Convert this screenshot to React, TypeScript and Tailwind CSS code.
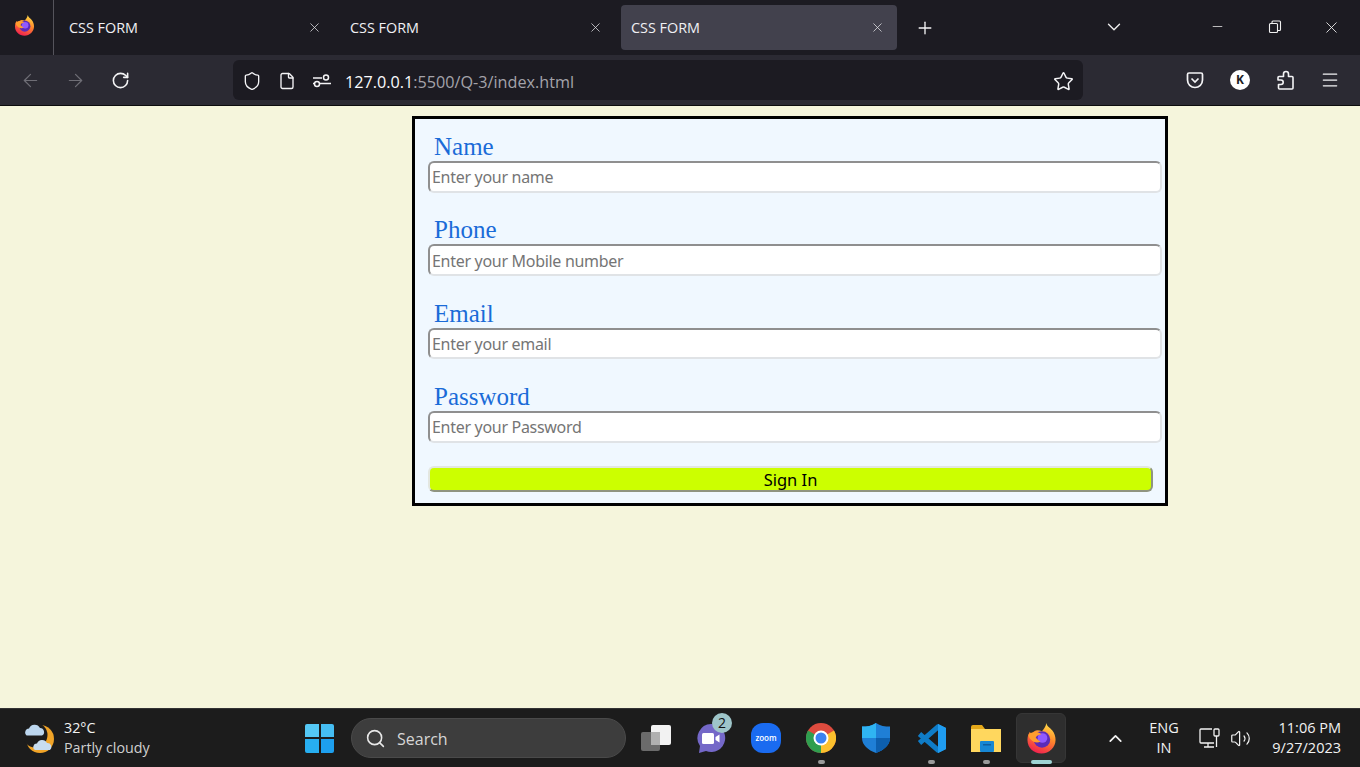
import React from 'react'
import { ArrowLeft, ArrowRight, RotateCw, Shield, File, Star, X, Plus, ChevronDown, ChevronUp, Minus, Menu, Search, Volume2 } from 'lucide-react'

const fields = [
  { label: 'Name', placeholder: 'Enter your name' },
  { label: 'Phone', placeholder: 'Enter your Mobile number' },
  { label: 'Email', placeholder: 'Enter your email' },
  { label: 'Password', placeholder: 'Enter your Password' },
]

function FirefoxLogo({ size, id }: { size: number; id: string }) {
  return (
    <svg width={size} height={size} viewBox="0 0 32 32">
      <defs>
        <linearGradient id={id} x1="0.75" y1="0" x2="0.35" y2="1">
          <stop offset="0" stopColor="#ffe14a" />
          <stop offset="0.45" stopColor="#ff8a2b" />
          <stop offset="1" stopColor="#f0204f" />
        </linearGradient>
      </defs>
      <path d="M21 0c.5 3.500 4 5 6 7.500 2.500 3 3.500 6.500 3.500 10C30.500 25 24 31.500 16 31.500S1.500 25.500 1.500 17.500c0-3.500 1-6.500 2.500-8.500.5 1 1 1.500 2 2 1.500-2 3.500-3.500 6-3.500 1.500 0 3 .5 4.500 1C18.500 6 20.500 3.500 21 0z" fill={`url(#${id})`} />
      <circle cx="16.500" cy="17" r="8.500" fill="#5b2bb8" />
      <circle cx="17" cy="15.500" r="5" fill="#9059ff" />
      <path d="M2.500 12C6 8.500 12 8.500 16 11.500c-3 .5-5.500 1.500-6 4 2 1 3 3 5 3.500-3 2-7.500 1-10-2-1.500-1.500-2.500-3-2.500-5z" fill="#ff9d2e" />
    </svg>
  )
}

function TabItem({ active }: { active?: boolean }) {
  return (
    <div className={active ? 'w-[276px] h-[45px] ml-[5px] pl-[10px] pr-[12px] flex items-center justify-between rounded bg-[#42414d]' : 'w-[281px] h-[45px] pl-[15px] pr-[13px] flex items-center justify-between'}>
      <span className="text-[14.400px] text-[#f0f0f4]">CSS FORM</span>
      <X size={15} strokeWidth={1.2} className="text-[#e4e4e8]" />
    </div>
  )
}

function TabBar() {
  return (
    <div className="h-[55px] bg-[#1c1b22] flex">
      <div className="w-[54px] h-[55px] border-r border-[#55545c] flex items-center justify-center pr-[4px] pb-[4px]">
        <FirefoxLogo size={21} id="ff-small" />
      </div>
      <div className="flex pt-[5px]">
        <TabItem />
        <TabItem />
        <TabItem active />
      </div>
      <Plus size={20} strokeWidth={1.6} className="text-[#f4f4f6] ml-[18px] mt-[18px]" />
      <ChevronDown size={22} strokeWidth={1.5} className="text-[#eeeeee] ml-[168px] mt-[16px]" />
      <Minus size={15} strokeWidth={1.2} className="text-[#f0f0f0] ml-[85px] mt-[19px]" />
      <svg width="14" height="14" viewBox="0 0 14 14" fill="none" stroke="#f0f0f0" strokeWidth="1.1" className="ml-[43px] mt-[20px]">
        <rect x="1.500" y="3.500" width="8" height="9" rx="1" />
        <path d="M4 3.500V2a1 1 0 0 1 1-1h6.500a1 1 0 0 1 1 1v7.500a1 1 0 0 1-1 1H9.500" />
      </svg>
      <X size={19} strokeWidth={1.1} className="text-[#f0f0f0] ml-[40px] mt-[18px]" />
    </div>
  )
}

function NavBar() {
  return (
    <div className="h-[51px] bg-[#2b2a33] border-b border-[#0c0c0d] flex items-start">
      <ArrowLeft size={21} strokeWidth={1.4} className="text-[#6f6e76] ml-[20px] mt-[15px]" />
      <ArrowRight size={21} strokeWidth={1.4} className="text-[#6f6e76] ml-[24px] mt-[15px]" />
      <RotateCw size={19} strokeWidth={2} className="text-[#f4f4f6] ml-[25px] mt-[16px]" />
      <div className="w-[850px] h-[40px] ml-[103px] mt-[5px] pt-[2px] rounded-md bg-[#1c1b22] flex items-center">
        <Shield size={20} strokeWidth={1.6} className="text-[#f4f4f6] ml-[9px]" />
        <File size={18} strokeWidth={1.8} className="text-[#f4f4f6] ml-[16px]" />
        <svg width="18" height="14" viewBox="0 0 18 14" fill="none" stroke="#f4f4f6" strokeWidth="1.500" className="ml-[17px]">
          <path d="M0 4h9M0 9.500h1M7 9.500h11" />
          <circle cx="13" cy="3.500" r="2.500" />
          <circle cx="4" cy="10" r="2.500" />
        </svg>
        <span className="ml-[14px] mt-[2px] text-[16.200px] text-[#fbfbfe]">
          127.0.0.1<span className="text-[#a4a3aa]">:5500/Q-3/index.html</span>
        </span>
        <Star size={21} strokeWidth={1.7} className="text-[#f4f4f6] ml-auto mr-[9px]" />
      </div>
      <svg width="18" height="18" viewBox="0 0 18 18" fill="none" stroke="#f4f4f6" strokeWidth="1.700" className="ml-[103px] mt-[16px]">
        <path d="M1.500 3.500a1.500 1.500 0 0 1 1.500-1.500h12a1.500 1.500 0 0 1 1.500 1.500V9a7.500 7.500 0 0 1-15 0z" />
        <path d="M5.500 7.500 9 11l3.500-3.500" />
      </svg>
      <div className="w-[20px] h-[20px] ml-[26px] mt-[15px] rounded-full bg-white flex items-center justify-center text-[12px] font-bold text-[#1c1b22]">K</div>
      <svg width="20" height="20" viewBox="0 0 20 20" fill="none" stroke="#f4f4f6" strokeWidth="1.600" strokeLinejoin="round" className="ml-[25px] mt-[15px]">
        <path d="M11 1.500c1.600 0 2.500 1 2.500 2.500v2.500H17a1 1 0 0 1 1 1V18a1 1 0 0 1-1 1H4.500a1 1 0 0 1-1-1v-3.500H6c1.500 0 2.200-1 2.200-2.200S7.500 10 6 10H3V7.500a1 1 0 0 1 1-1h4.500V4c0-1.500 1-2.500 2.500-2.500z" />
      </svg>
      <Menu size={20} strokeWidth={1.5} className="text-[#f4f4f6] ml-[25px] mt-[15px]" />
    </div>
  )
}

function SignInForm() {
  return (
    <form className="w-[756px] h-[390px] ml-[412px] mt-[10px] border-[3px] border-black bg-[#f0f8ff] pt-[14px] pl-[13px] pr-[4px]">
      {fields.map((f) => (
        <div key={f.label} className="h-[83.400px]">
          <label className="block h-[28px] pl-[6px] text-[25px] leading-[28px] text-[#1a6bd8] font-['Liberation_Serif',serif]">{f.label}</label>
          <input
            type="text"
            placeholder={f.placeholder}
            className="block w-[734px] h-[31.500px] px-[2px] pt-[1px] rounded-md border-2 border-t-[#8f8f8f] border-l-[#8f8f8f] border-r-[#e0e3e6] border-b-[#e0e3e6] bg-white text-[16px] tracking-[-0.300px] placeholder:text-[#757575] font-['Noto_Sans',sans-serif] outline-none"
          />
        </div>
      ))}
      <button
        type="button"
        className="block w-[725px] h-[26px] mt-[-0.600px] pt-[1px] rounded-md border-2 border-t-[#e3e6e0] border-l-[#e3e6e0] border-r-[#8f9480] border-b-[#8f9480] bg-[#ccff00] text-[16.500px] leading-[22px] text-black font-['Noto_Sans',sans-serif]"
      >
        Sign In
      </button>
    </form>
  )
}

function WeatherIcon() {
  return (
    <svg width="32" height="32" viewBox="0 0 32 32">
      <circle cx="16" cy="17" r="14" fill="#f0a428" />
      <circle cx="11" cy="13" r="12.500" fill="#1c1c1c" />
      <path d="M2 13a4 4 0 0 1 3-6.500 6 6 0 0 1 11-.5 4 4 0 0 1 2 7.500H4a3 3 0 0 1-2-.5z" fill="#bcd6ee" />
      <path d="M11 28a3.500 3.500 0 0 1 2-6.500 5.500 5.500 0 0 1 10-.5 4 4 0 0 1 3 7z" fill="#c8ddf0" />
    </svg>
  )
}

function WindowsLogo() {
  return (
    <div className="grid grid-cols-2 gap-[2px] w-[29px] h-[29px]">
      <div className="bg-[#54c8f5] rounded-tl-[2px]" />
      <div className="bg-[#45bdf2] rounded-tr-[2px]" />
      <div className="bg-[#27aef0] rounded-bl-[2px]" />
      <div className="bg-[#1d9fee] rounded-br-[2px]" />
    </div>
  )
}

function TaskIcon({ children, mark, active }: { children: React.ReactNode; mark?: 'dot' | 'wide'; active?: boolean }) {
  return (
    <div className="relative w-[55px] h-[50px] flex items-center justify-center">
      {active && <div className="absolute left-[2px] top-0 w-[50px] h-[50px] rounded-md bg-[#2e2e2e] border border-[#363636]" />}
      <div className="relative">{children}</div>
      {mark === 'dot' && <div className="absolute left-[24px] bottom-[-1px] w-[7px] h-[4px] rounded-full bg-[#9a9a9a]" />}
      {mark === 'wide' && <div className="absolute left-[17px] bottom-[-1px] w-[21px] h-[4px] rounded-full bg-[#9fd4d4]" />}
    </div>
  )
}

function Taskbar() {
  return (
    <div className="h-[59px] bg-[#1c1c1c] border-t border-[#333333] flex items-center text-white font-['Open_Sans',sans-serif]">
      <div className="ml-[24px]"><WeatherIcon /></div>
      <div className="ml-[8px] w-[140px] text-[14.300px] leading-[20px]">
        <div className="text-[#f2f2f2]">32°C</div>
        <div className="text-[#d0d0d0]">Partly cloudy</div>
      </div>
      <div className="ml-[101px]"><WindowsLogo /></div>
      <div className="ml-[17px] w-[275px] h-[40px] rounded-full bg-[#3d3d3d] border border-[#4a4a4a] flex items-center">
        <Search size={21} strokeWidth={1.800} className="ml-[13px] text-[#e8e8e8]" />
        <span className="ml-[11px] mt-[2px] text-[16px] text-[#d6d6d6]">Search</span>
      </div>
      <div className="ml-[2.500px] flex items-center">
        <TaskIcon>
          <svg width="30" height="26" viewBox="0 0 30 26">
            <rect x="0" y="7" width="19" height="19" rx="2" fill="#6b6b6b" />
            <rect x="10" y="0" width="20" height="20" rx="2" fill="#f2f2f2" />
            <rect x="10" y="7" width="9" height="13" fill="#b0b0b0" />
          </svg>
        </TaskIcon>
        <TaskIcon>
          <div className="relative w-[30px] h-[30px]">
            <svg width="30" height="30" viewBox="0 0 30 30">
              <path d="M15 1a14 14 0 1 1-5 27l-7 2 1-7A14 14 0 0 1 15 1z" fill="#7468c8" />
              <rect x="6" y="10" width="12" height="11" rx="1.500" fill="#fff" />
              <path d="M19.500 14l4-2.500v8l-4-2.500z" fill="#fff" />
            </svg>
            <div className="absolute left-[16px] top-[-10px] w-[20px] h-[20px] rounded-full bg-[#9ec5c9] text-[#111] text-[14px] leading-[20px] text-center">2</div>
          </div>
        </TaskIcon>
        <TaskIcon>
          <div className="w-[30px] h-[30px] rounded-[12px] bg-[#1a6bf0] flex items-center justify-center text-[8px] font-semibold text-white">zoom</div>
        </TaskIcon>
        <TaskIcon mark="dot">
          <svg width="30" height="30" viewBox="0 0 30 30">
            <circle cx="15" cy="15" r="15" fill="#dd4b3e" />
            <path d="M15 15 2 7.500A15 15 0 0 0 15 30z" fill="#2f9e4f" />
            <path d="M15 15V30A15 15 0 0 0 28 7.500z" fill="#fbc02d" />
            <circle cx="15" cy="15" r="7.500" fill="#fff" />
            <circle cx="15" cy="15" r="5.500" fill="#3b82f0" />
          </svg>
        </TaskIcon>
        <TaskIcon>
          <svg width="28" height="30" viewBox="0 0 28 30">
            <path d="M14 0c4 3 9 3.500 14 3.500V15c0 7-6 12-14 15C6 27 0 22 0 15V3.500C5 3.500 10 3 14 0z" fill="#1f7fd6" />
            <path d="M14 0C10 3 5 3.500 0 3.500V15h14z" fill="#2fb4f2" />
            <path d="M14 15h14c0 7-6 12-14 15z" fill="#0d5fae" />
          </svg>
        </TaskIcon>
        <TaskIcon mark="dot">
          <svg width="30" height="31" viewBox="0 0 30 31" fill="none">
            <path d="M22 1 30 5v21l-8 4z" fill="#1f9cf0" />
            <path d="M23 3 3.500 20M3.500 11 23 28" stroke="#0f7cc7" strokeWidth="5" />
            <path d="M22 1 30 5v21l-8 4z" fill="#1f9cf0" />
          </svg>
        </TaskIcon>
        <TaskIcon mark="dot">
          <svg width="30" height="30" viewBox="0 0 30 30">
            <path d="M0 4a2 2 0 0 1 2-2h9l3 4h16v22H0z" fill="#e5a91a" />
            <rect x="0" y="6" width="30" height="23" fill="#ffd75e" />
            <rect x="9" y="18" width="14" height="11" rx="1" fill="#1787d4" />
            <rect x="12" y="21" width="8" height="1.500" fill="#0f5f9f" />
          </svg>
        </TaskIcon>
        <TaskIcon mark="wide" active>
          <FirefoxLogo size={31} id="ff-large" />
        </TaskIcon>
      </div>
      <ChevronUp size={21} strokeWidth={2} className="ml-[36px] text-[#f2f2f2]" />
      <div className="ml-[21.500px] w-[34px] text-center text-[14.500px] leading-[20px] text-[#f2f2f2]">
        <div>ENG</div>
        <div>IN</div>
      </div>
      <svg width="22" height="22" viewBox="0 0 22 22" fill="none" stroke="#f2f2f2" strokeWidth="1.300" className="ml-[18px]">
        <path d="M15 16H2a1 1 0 0 1-1-1V3a1 1 0 0 1 1-1h11" />
        <path d="M5 20h10M9 16v4" />
        <rect x="15" y="2" width="5" height="7" rx="1" />
        <path d="M17.500 9v11" />
      </svg>
      <Volume2 size={21} strokeWidth={1.400} className="ml-[9px] text-[#f2f2f2]" />
      <div className="ml-auto mr-[19px] text-right text-[14.500px] leading-[20px] text-[#f2f2f2]">
        <div>11:06 PM</div>
        <div>9/27/2023</div>
      </div>
    </div>
  )
}

export default function App() {
  return (
    <div className="w-[1360px] h-[767px] flex flex-col overflow-hidden bg-[#f5f5dc] font-['Open_Sans',sans-serif]">
      <TabBar />
      <NavBar />
      <div className="flex-1">
        <SignInForm />
      </div>
      <Taskbar />
    </div>
  )
}
